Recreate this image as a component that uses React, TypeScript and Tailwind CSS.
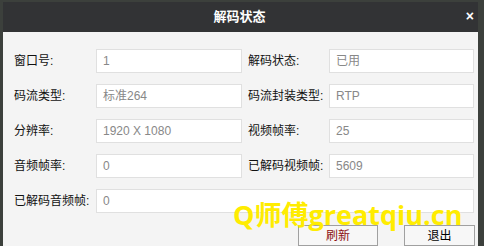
import React from 'react';

const rows: [string, string, string?, string?][] = [
  ['窗口号:', '1', '解码状态:', '已用'],
  ['码流类型:', '标准264', '码流封装类型:', 'RTP'],
  ['分辨率:', '1920 X 1080', '视频帧率:', '25'],
  ['音频帧率:', '0', '已解码视频帧:', '5609'],
];

const font = { fontFamily: '"Liberation Sans", "Noto Sans CJK SC", sans-serif' };

const Field: React.FC<{ value: string; width: string }> = ({ value, width }) => (
  <div className={`${width} h-[24px] bg-white border border-[#e0e0e0] flex items-center pl-[6px] text-[12px] text-[#888]`}>
    {value}
  </div>
);

const App: React.FC = () => {
  return (
    <div className="w-[484px] h-[246px] bg-[#3c403c] pt-[2px] pl-[3px] pr-[6px] overflow-hidden" style={font}>
      <div className="relative h-[260px] bg-[#f4f4f4]">
        <div className="h-[30px] bg-[#323335] flex items-center justify-center relative">
          <span className="text-white font-bold text-[13px] ml-[-2px]">解码状态</span>
          <span className="absolute right-[4px] top-[7px] text-white font-bold text-[14px] leading-none">×</span>
        </div>
        <div className="pt-[17px] pl-[11px] flex flex-col gap-[11px]">
          {rows.map(([l1, v1, l2, v2]) => (
            <div key={l1} className="flex items-center">
              <div className="w-[82px] text-[12px] text-[#111]">{l1}</div>
              <Field value={v1} width="w-[146px]" />
              <div className="w-[87px] pl-[6px] text-[12px] text-[#111]">{l2}</div>
              <Field value={v2 ?? ''} width="w-[145px]" />
            </div>
          ))}
          <div className="flex items-center">
            <div className="w-[82px] text-[12px] text-[#111]">已解码音频帧:</div>
            <Field value="0" width="w-[378px]" />
          </div>
        </div>
        <div className="flex justify-end gap-[26px] pr-[3px] mt-[12px]">
          <button className="w-[80px] h-[21px] border border-[#a0a0a0] bg-[#f7f7f7] text-[12px] text-[#8b1010]">刷新</button>
          <button className="w-[71px] h-[21px] border border-[#a0a0a0] bg-[#f7f7f7] text-[12px] text-black">退出</button>
        </div>
        <div
          className="absolute left-[230px] top-[199px] text-[27px] font-bold text-[#ffec00] leading-none whitespace-nowrap pointer-events-none"
          style={{ fontFamily: '"Open Sans", "Noto Sans CJK SC", sans-serif' }}
        >
          Q师傅greatqiu.cn
        </div>
      </div>
    </div>
  );
};

export default App;
